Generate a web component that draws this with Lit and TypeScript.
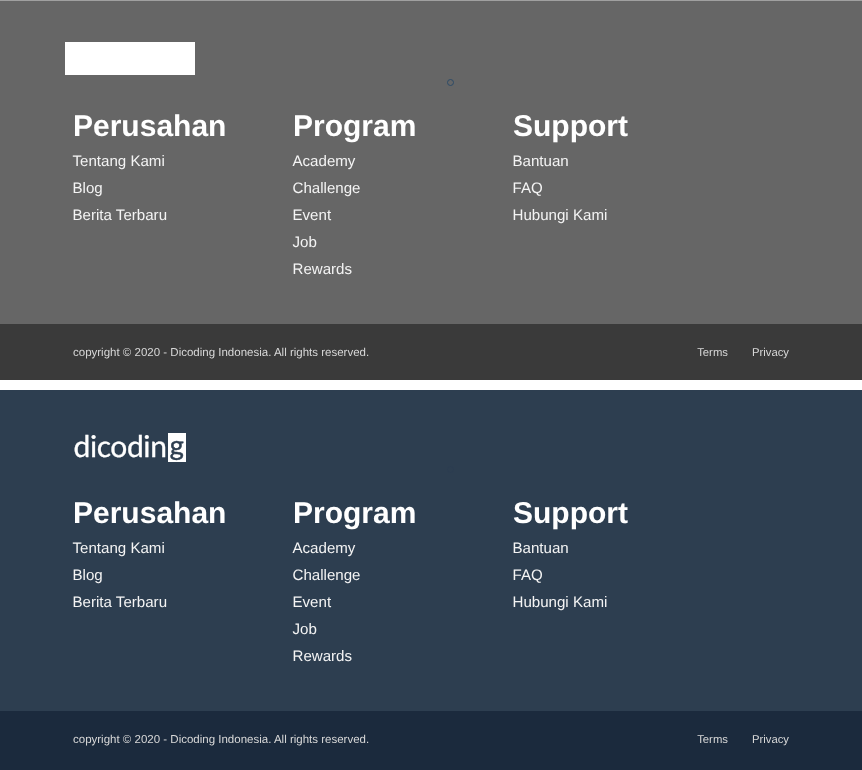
import { LitElement, html, css } from 'lit';
import { customElement, property } from 'lit/decorators.js';

const COLUMNS: { title: string; links: string[] }[] = [
  { title: 'Perusahan', links: ['Tentang Kami', 'Blog', 'Berita Terbaru'] },
  { title: 'Program', links: ['Academy', 'Challenge', 'Event', 'Job', 'Rewards'] },
  { title: 'Support', links: ['Bantuan', 'FAQ', 'Hubungi Kami'] },
];

@customElement('site-footer')
export class SiteFooter extends LitElement {
  @property({ type: Boolean, reflect: true }) dimmed = false;

  render() {
    return html`
      <div class="main">
        <div class="logo-row">
          ${this.dimmed
            ? html`<div class="logo-blank"></div>`
            : html`<div class="logo">dicodin<span class="logo-g">g</span></div>`}
        </div>
        <div class="columns">
          ${COLUMNS.map(c => html`
            <div class="column">
              <h3>${c.title}</h3>
              ${c.links.map(l => html`<a>${l}</a>`)}
            </div>
          `)}
        </div>
        <span class="cursor"></span>
      </div>
      <div class="bar">
        <span>copyright © 2020 - Dicoding Indonesia. All rights reserved.</span>
        <div class="bar-links"><a>Terms</a><a>Privacy</a></div>
      </div>
    `;
  }

  static styles = css`
    :host {
      display: block;
      font-family: "Liberation Sans", Arial, sans-serif;
      color: #fff;
      text-rendering: geometricPrecision;
      --main: #2d3e50;
      --bar: #1b2a3d;
      --cursor: #2b3b50;
    }
    :host([dimmed]) {
      --main: #666666;
      --bar: #3a3a3a;
      --cursor: #2c4a66;
    }
    .main {
      position: relative;
      background: var(--main);
      height: 321px;
      padding: 40px 0 0 72.5px;
      box-sizing: border-box;
    }
    :host([dimmed]) .main {
      height: 324px;
      padding-top: 41px;
      border-top: 1px solid #a0a0a0;
    }
    .logo-row {
      height: 33px;
      margin-bottom: 32px;
    }
    :host([dimmed]) .logo-row {
      margin-bottom: 33px;
    }
    .logo-blank {
      width: 130px;
      height: 33px;
      margin-left: -7.5px;
      background: #fff;
    }
    .logo {
      display: flex;
      align-items: center;
      height: 33px;
      padding-left: 1px;
      font-family: Lato, sans-serif;
      font-weight: 400;
      font-size: 30px;
      line-height: 33px;
      letter-spacing: -0.4px;
      -webkit-text-stroke: 0.3px #fff;
      filter: blur(0.4px);
    }
    .logo-g {
      display: block;
      width: 18px;
      height: 29px;
      margin: 0 0 -1px 1px;
      background: #fff;
      color: #2d3e50;
      -webkit-text-stroke: 0.5px #2d3e50;
      font-size: 27px;
      line-height: 24px;
      text-align: center;
    }
    .columns {
      display: flex;
      filter: blur(0.3px);
    }
    .column {
      width: 220px;
      display: flex;
      flex-direction: column;
    }
    h3 {
      margin: 1px 0 3px 0.5px;
      font-size: 30px;
      line-height: 36px;
      font-weight: 700;
    }
    :host([dimmed]) h3 {
      margin-bottom: 2.5px;
    }
    .column a {
      font-size: 15.1px;
      line-height: 27px;
      color: #f4f4f4;
    }
    .cursor {
      position: absolute;
      left: 447px;
      top: 78px;
      width: 7px;
      height: 7px;
      box-sizing: border-box;
      border: 1px solid var(--cursor);
      border-radius: 50%;
    }
    :host(:not([dimmed])) .cursor {
      top: 76px;
      opacity: 0.3;
    }
    .bar {
      background: var(--bar);
      display: flex;
      justify-content: space-between;
      align-items: center;
      height: 56px;
      box-sizing: border-box;
      padding: 2px 73px 0;
      font-size: 11.5px;
      color: #d8d8d8;
    }
    .bar > * {
      filter: blur(0.3px);
    }
    :host(:not([dimmed])) .bar {
      height: 59px;
      padding-top: 0;
      padding-bottom: 1px;
    }
    .bar-links {
      display: flex;
      gap: 24px;
      font-size: 11.3px;
    }
  `;
}

@customElement('app-root')
export class AppRoot extends LitElement {
  render() {
    return html`
      <site-footer dimmed></site-footer>
      <div class="gap"></div>
      <site-footer></site-footer>
    `;
  }

  static styles = css`
    :host {
      display: block;
      background: #fff;
    }
    .gap {
      height: 10px;
    }
  `;
}
